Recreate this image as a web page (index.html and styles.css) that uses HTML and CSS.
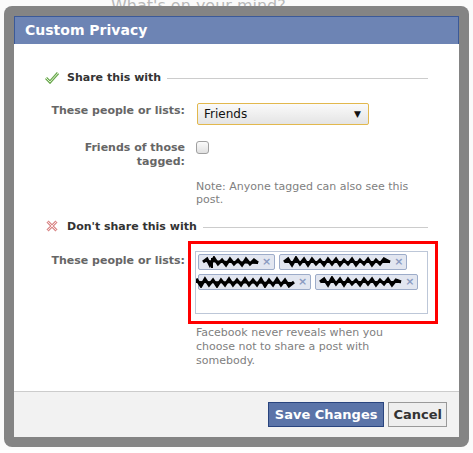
FILE: index.html
```html
<!DOCTYPE html>
<html>
<head>
<meta charset="utf-8">
<link rel="stylesheet" href="styles.css">
</head>
<body>
<div class="page">
  <div class="page-status">What's on your mind?</div>
</div>
<div class="frame">
  <div class="dialog">
    <div class="dlg-title">Custom Privacy</div>
    <div class="dlg-body">
      <div class="sec-head">
        <svg class="sec-icon" width="14" height="13" viewBox="0 0 14 13"><path d="M1 7 L5 11 L13 2" fill="none" stroke="#6aa84f" stroke-width="3" stroke-linejoin="miter"/><path d="M1 7 L5 11 L13 2" fill="none" stroke="#dff2d0" stroke-width="1"/></svg>
        <span class="sec-title">Share this with</span>
        <span class="sec-rule"></span>
      </div>
      <div class="row row-select">
        <div class="lbl">These people or lists:</div>
        <div class="ctl">
          <div class="select"><span>Friends</span><span class="arrow">&#9660;</span></div>
        </div>
      </div>
      <div class="row row-check">
        <div class="lbl">Friends of those tagged:</div>
        <div class="ctl"><span class="checkbox"></span></div>
      </div>
      <div class="row row-note">
        <div class="lbl"></div>
        <div class="ctl note">Note: Anyone tagged can also see this post.</div>
      </div>
      <div class="sec-head sec-head2">
        <svg class="sec-icon" width="12" height="12" viewBox="0 0 12 12"><path d="M1.5 1.5 L10.5 10.5 M10.5 1.5 L1.5 10.5" fill="none" stroke="#d98a8a" stroke-width="3"/><path d="M1.5 1.5 L10.5 10.5 M10.5 1.5 L1.5 10.5" fill="none" stroke="#fbe3e3" stroke-width="1"/></svg>
        <span class="sec-title">Don't share this with</span>
        <span class="sec-rule"></span>
      </div>
      <div class="row row-tokens">
        <div class="lbl">These people or lists:</div>
        <div class="ctl">
          <div class="redbox">
            <div class="tokenbox">
              <span class="token">
                <svg width="58" height="12" viewBox="0 0 58 12"><path d="M1 6 L5 3 L8 9 L12 2 L16 8 L20 4 L24 9 L28 3 L32 8 L36 4 L40 9 L44 3 L48 8 L52 4 L56 7" fill="none" stroke="#000" stroke-width="3"/><path d="M2 5 L56 7 M10 2 L10 14" stroke="#000" stroke-width="2"/></svg>
                <span class="x">&#215;</span>
              </span>
              <span class="token">
                <svg width="109" height="12" viewBox="0 0 109 12"><path d="M1 6 L5 3 L9 9 L13 2 L17 8 L21 3 L25 9 L29 3 L33 8 L37 4 L41 9 L45 3 L49 8 L53 3 L57 9 L61 4 L65 8 L69 3 L73 9 L77 4 L81 8 L85 3 L89 9 L93 4 L97 8 L101 3 L107 6" fill="none" stroke="#000" stroke-width="3"/><path d="M2 6 L107 6" stroke="#000" stroke-width="2"/></svg>
                <span class="x">&#215;</span>
              </span>
              <span class="token token-wide">
                <svg width="100" height="12" viewBox="0 0 100 12"><path d="M-4 7 L1 4 L5 10 L9 3 L13 9 L17 4 L21 10 L25 4 L29 9 L33 3 L37 9 L41 4 L45 9 L49 3 L53 9 L57 4 L61 9 L65 3 L69 10 L73 4 L77 9 L81 3 L85 9 L89 4 L93 10 L98 6" fill="none" stroke="#000" stroke-width="3"/><path d="M-4 6 L98 7" stroke="#000" stroke-width="2"/></svg>
                <span class="x">&#215;</span>
              </span>
              <span class="token">
                <svg width="84" height="12" viewBox="0 0 84 12"><path d="M1 6 L5 3 L9 9 L13 2 L17 8 L21 3 L25 9 L29 3 L33 8 L37 4 L41 9 L45 3 L49 8 L53 3 L57 9 L61 4 L65 8 L69 3 L73 9 L77 4 L82 6" fill="none" stroke="#000" stroke-width="3"/><path d="M2 6 L82 6" stroke="#000" stroke-width="2"/></svg>
                <span class="x">&#215;</span>
              </span>
            </div>
          </div>
          <div class="hint">Facebook never reveals when you choose not to share a post with somebody.</div>
        </div>
      </div>
    </div>
    <div class="dlg-footer">
      <button class="btn btn-primary">Save Changes</button>
      <button class="btn">Cancel</button>
    </div>
  </div>
</div>
</body>
</html>
```

FILE: styles.css
```css
html, body {
  margin: 0;
  padding: 0;
}
body {
  background: #fff;
  font-family: "DejaVu Sans", Verdana, sans-serif;
  font-size: 11px;
  color: #333;
  width: 473px;
  height: 453px;
  overflow: hidden;
  position: relative;
}
.page {
  height: 453px;
  background: #fafafa;
}
.page-status {
  padding: 0 0 0 111px;
  margin-top: -3px;
  font-size: 16px;
  line-height: 18px;
  color: #b8b8b8;
}
.frame {
  position: absolute;
  left: 4px;
  top: 6px;
  width: 445px;
  padding: 10px;
  background: #848484;
  border-radius: 8px;
}
.dialog {
  background: #fff;
  display: flex;
  flex-direction: column;
}
.dlg-title {
  height: 27px;
  background: #6d84b4;
  border: 1px solid #3b5998;
  border-bottom: none;
  color: #fff;
  font-weight: bold;
  font-size: 14px;
  line-height: 27px;
  padding-left: 10px;
}
.dlg-body {
  padding: 26px 31px 0 31px;
  height: 321px;
}
.sec-head {
  display: flex;
  align-items: center;
  height: 14px;
}
.sec-icon {
  width: 14px;
  margin-right: 8px;
  flex: none;
}
.sec-title {
  font-weight: bold;
  color: #333;
  white-space: nowrap;
}
.sec-rule {
  flex: 1;
  height: 1px;
  background: #ccc;
  margin-left: 6px;
  margin-top: 2px;
}
.sec-head2 {
  margin-top: 13px;
}
.row {
  display: grid;
  grid-template-columns: 140px 1fr;
  column-gap: 11px;
  line-height: 14px;
}
.lbl {
  text-align: right;
  font-weight: bold;
  color: #666;
}
.row-select {
  margin-top: 19px;
}
.row-select .lbl {
  padding-top: 1px;
}
.select {
  border: 1px solid #e2b84d;
  border-radius: 2px;
  background: linear-gradient(#fafafa, #e4e4e4);
  display: flex;
  justify-content: space-between;
  align-items: center;
  padding: 0 7px 0 6px;
  box-sizing: border-box;
  width: 172px;
  height: 22px;
  margin-left: 1px;
  color: #111;
  font-size: 12px;
}
.arrow {
  font-size: 9px;
  color: #111;
}
.row-check {
  margin-top: 16px;
}
.row-check .lbl {
  padding: 0 0 0 20px;
}
.checkbox {
  display: block;
  width: 11px;
  height: 11px;
  margin-top: 0;
  border: 1px solid #a0a0a0;
  border-radius: 3px;
  background: linear-gradient(#fbfbfb, #e0e0e0);
}
.row-note {
  margin-top: 11px;
}
.note {
  color: #808080;
  line-height: 13px;
  padding-right: 10px;
}
.row-tokens {
  margin-top: 8px;
}
.row-tokens .lbl {
  padding-top: 13px;
}
.redbox {
  margin-left: -8px;
  width: 233px;
  border: 3px solid #f00;
  padding: 7px 7px 7px 4px;
}
.tokenbox {
  height: 59px;
  border: 1px solid #bdc7d8;
  padding: 2px 0 0 2px;
  display: flex;
  flex-wrap: wrap;
  align-content: flex-start;
  row-gap: 4px;
  column-gap: 4px;
}
.token {
  display: inline-flex;
  align-items: center;
  height: 14px;
  border: 1px solid #9dacc9;
  border-radius: 2px;
  background: #e2e6f0;
  padding: 0 3px 0 3px;
}
.token svg {
  display: block;
  margin-right: 2px;
}
.token-wide svg {
  margin-left: -6px;
}
.x {
  color: #8a9ac0;
  font-weight: bold;
  font-size: 11px;
  line-height: 14px;
}
.hint {
  margin-top: 2px;
  color: #808080;
  width: 205px;
}
.dlg-footer {
  border-top: 1px solid #ccc;
  background: #f2f2f2;
  height: 46px;
  display: flex;
  justify-content: flex-end;
  align-items: flex-start;
  padding: 10px 12px 0 0;
  box-sizing: border-box;
  gap: 4px;
}
.btn {
  height: 25px;
  padding: 0 4px;
  border: 1px solid #999;
  background: #eee;
  color: #333;
  font-family: "DejaVu Sans", Verdana, sans-serif;
  font-weight: bold;
  font-size: 13px;
  margin: 0;
}
.btn-primary {
  padding: 0 6px;
  background: #5b74a8;
  border-color: #29447e;
  color: #fff;
}
```
